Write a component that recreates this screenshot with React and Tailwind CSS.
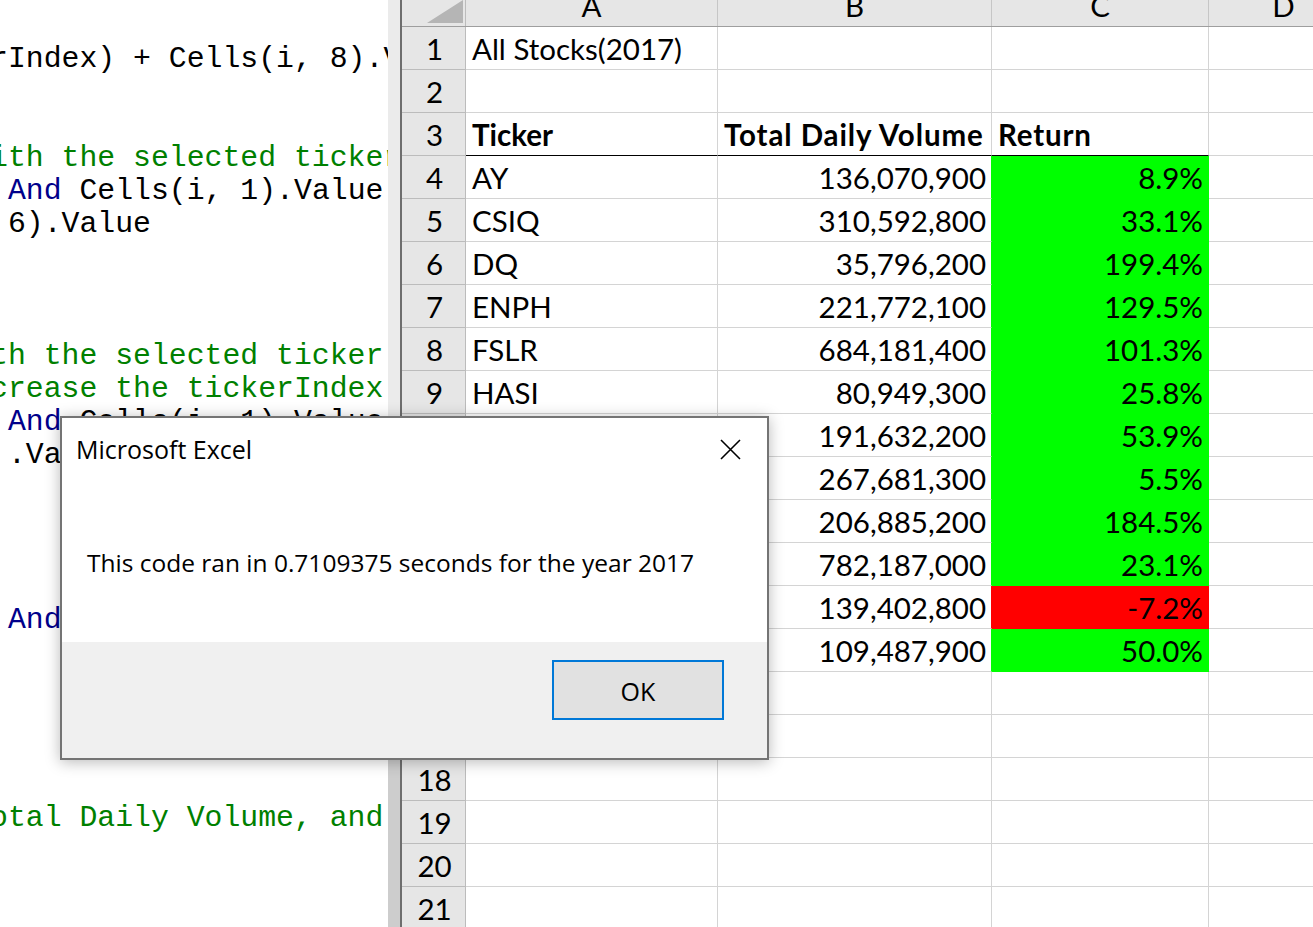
import React from "react";

const G = "text-[#008000]";
const B = "text-[#00008b]";
const K = "text-black";

const codeLines = [
  [],
  [[K, "rIndex) + Cells(i, 8).Value"]],
  [],
  [],
  [[G, "ith the selected ticker"]],
  [[K, " "], [B, "And"], [K, " Cells(i, 1).Value"]],
  [[K, " 6).Value"]],
  [],
  [],
  [],
  [[G, "th the selected ticker"]],
  [[G, "crease the tickerIndex"]],
  [[K, " "], [B, "And"], [K, " Cells(i, 1).Value"]],
  [[K, " .Value"]],
  [],
  [],
  [],
  [],
  [[K, " "], [B, "And"], [K, " Cells(i, 1).Value"]],
  [],
  [],
  [],
  [],
  [],
  [[G, "otal Daily Volume, and"]],
  [],
  [],
  [],
];

const data = [
  { a: "All Stocks(2017)" },
  {},
  { a: "Ticker", b: "Total Daily Volume", c: "Return", head: true },
  { a: "AY", b: "136,070,900", c: "8.9%" },
  { a: "CSIQ", b: "310,592,800", c: "33.1%" },
  { a: "DQ", b: "35,796,200", c: "199.4%" },
  { a: "ENPH", b: "221,772,100", c: "129.5%" },
  { a: "FSLR", b: "684,181,400", c: "101.3%" },
  { a: "HASI", b: "80,949,300", c: "25.8%" },
  { a: "JKS", b: "191,632,200", c: "53.9%" },
  { a: "RUN", b: "267,681,300", c: "5.5%" },
  { a: "SEDG", b: "206,885,200", c: "184.5%" },
  { a: "SPWR", b: "782,187,000", c: "23.1%" },
  { a: "TERP", b: "139,402,800", c: "-7.2%", neg: true },
  { a: "VSLR", b: "109,487,900", c: "50.0%" },
  {},
  {},
  {},
  {},
  {},
  {},
];

function Editor() {
  return (
    <div className="w-[388px] h-full overflow-hidden bg-white shrink-0">
      <div
        className="ml-[-10px] pt-[9.5px] whitespace-pre text-[29.8px] leading-[33px]"
        style={{ fontFamily: '"Liberation Mono", "Courier New", monospace' }}
      >
        {codeLines.map((segs, i) => (
          <div key={i} className="h-[33px]">
            {segs.map(([cls, t], j) => (
              <span key={j} className={cls}>
                {t}
              </span>
            ))}
          </div>
        ))}
      </div>
    </div>
  );
}

function Splitter() {
  return (
    <div className="flex shrink-0 h-full">
      <div className="w-[12px] h-full flex flex-col">
        <div className="h-[416px] bg-[#ebebeb]" />
        <div className="flex-1 bg-[#cdcdcd]" />
      </div>
      <div className="w-[2px] h-full bg-[#6e6e6e]" />
    </div>
  );
}

function Sheet() {
  const font = { fontFamily: 'Lato, "Open Sans", sans-serif' };
  return (
    <div className="flex-1 h-full overflow-hidden bg-white text-black text-[29.5px]" style={font}>
      <div className="flex h-[27px] bg-[#e6e6e6] border-b border-[#9e9e9e]">
        <div className="w-[64px] shrink-0 border-r border-[#bcbcbc] relative overflow-hidden">
          <svg className="absolute left-[25px] top-0" width="36" height="23" viewBox="0 0 36 23">
            <polygon points="0,23 36,23 36,0" fill="#b5b5b5" />
          </svg>
        </div>
        {[
          ["A", "w-[252px]"],
          ["B", "w-[274px]"],
          ["C", "w-[217px]"],
          ["D", "w-[150px]"],
        ].map(([l, w]) => (
          <div key={l} className={`${w} shrink-0 border-r border-[#c6c6c6] flex justify-center overflow-hidden`}>
            <span className="leading-none mt-[-9px]">{l}</span>
          </div>
        ))}
      </div>
      {data.map((r, i) => {
        const colored = r.c && !r.head;
        const fill = r.neg ? "bg-[#ff0000] border-[#ff0000]" : "bg-[#00ff00] border-[#00ff00]";
        const headB = r.head ? "border-b-black" : "";
        return (
          <div key={i} className="flex h-[43px]">
            <div className="w-[64px] shrink-0 bg-[#e6e6e6] border-r border-b border-[#bcbcbc] flex items-end justify-center pl-[2px] pb-[6px]">
              <span className="leading-none">{i + 1}</span>
            </div>
            <div className={`w-[252px] shrink-0 border-r border-b border-[#d4d4d4] ${headB} flex items-end pl-[6px] pb-[6px] whitespace-nowrap ${r.head ? "font-bold" : ""}`}>
              <span className="leading-none">{r.a}</span>
            </div>
            <div
              className={`w-[274px] shrink-0 border-r border-b border-[#d4d4d4] ${headB} ${colored ? "border-r-[#00ff00]" : ""} ${r.neg ? "border-r-[#ff0000]" : ""} flex items-end pb-[6px] whitespace-nowrap ${
                r.head ? "font-bold pl-[6px] tracking-[0.9px]" : "justify-end pr-[5px]"
              }`}
            >
              <span className="leading-none">{r.b}</span>
            </div>
            <div
              className={`w-[217px] shrink-0 border-r border-b ${colored ? fill : "border-[#d4d4d4]"} ${headB} flex items-end pb-[6px] whitespace-nowrap ${
                r.head ? "font-bold pl-[6px] tracking-[0.8px]" : "justify-end pr-[5px]"
              }`}
            >
              <span className="leading-none">{r.c}</span>
            </div>
            <div className="flex-1 border-b border-[#d4d4d4]" />
          </div>
        );
      })}
    </div>
  );
}

function Dialog() {
  return (
    <div
      className="absolute left-[60px] top-[416px] w-[709px] h-[344px] border-2 border-[#747474] bg-white flex flex-col shadow-[0_2px_14px_rgba(0,0,0,0.28)] text-black"
      style={{ fontFamily: '"Open Sans", "Noto Sans", sans-serif' }}
    >
      <div className="flex-1 flex flex-col">
        <div className="flex items-start justify-between pl-[14px] pr-[26px] pt-[15px]">
          <span className="text-[25px] leading-[32px]">Microsoft Excel</span>
          <svg className="mt-[6px]" width="21" height="21" viewBox="0 0 21 21">
            <path d="M1 1 L20 20 M20 1 L1 20" stroke="#000" strokeWidth="1.6" fill="none" />
          </svg>
        </div>
        <div className="pl-[25px] mt-[82px] text-[24.5px] leading-[32px] whitespace-nowrap">
          This code ran in 0.7109375 seconds for the year 2017
        </div>
      </div>
      <div className="h-[116px] bg-[#f0f0f0] flex justify-end items-start pt-[18px] pr-[43px]">
        <div className="w-[172px] h-[60px] border-2 border-[#0078d7] bg-[#e1e1e1] flex items-center justify-center text-[25px] pt-[4px]">
          OK
        </div>
      </div>
    </div>
  );
}

export default function App() {
  return (
    <div className="relative w-[1313px] h-[927px] overflow-hidden bg-white flex">
      <Editor />
      <Splitter />
      <Sheet />
      <Dialog />
    </div>
  );
}
